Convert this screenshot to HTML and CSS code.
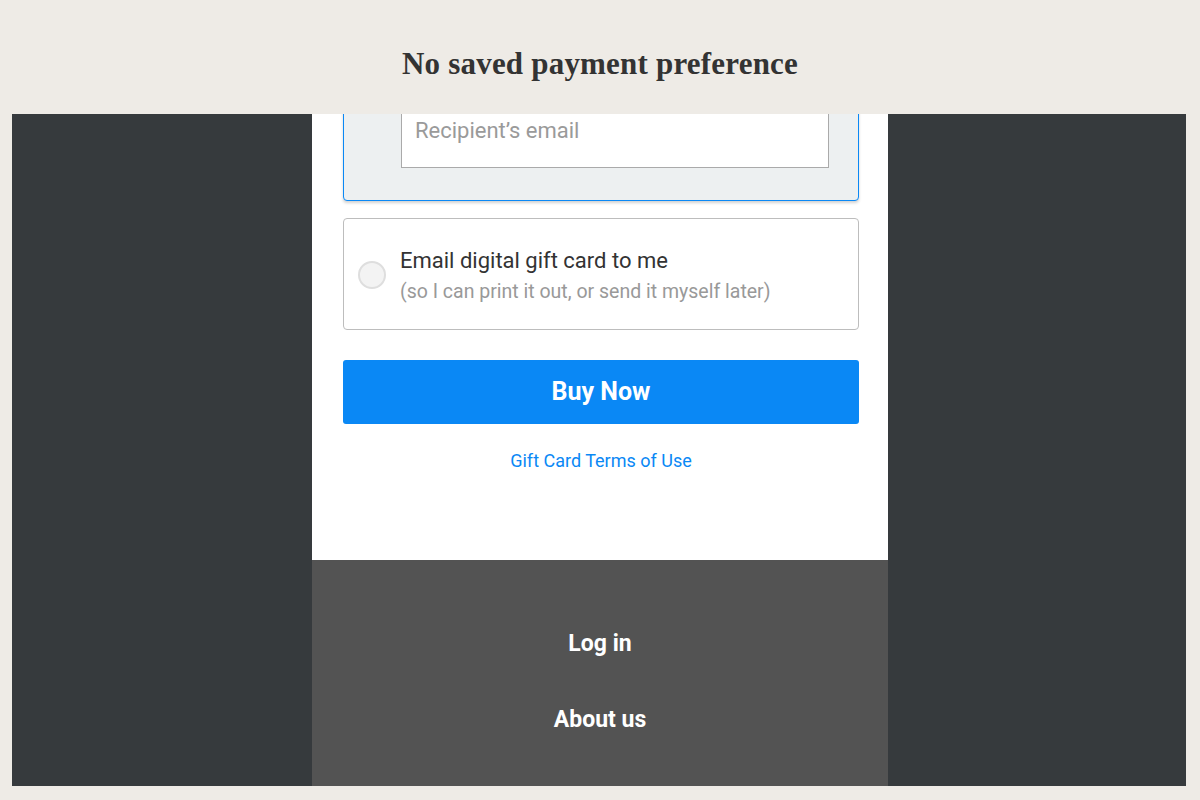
FILE: index.html
```html
<!DOCTYPE html>
<html lang="en">
<head>
<meta charset="utf-8">
<title>No saved payment preference</title>
<link rel="stylesheet" href="styles.css">
</head>
<body>
<header class="page-header">
  <h1 class="page-title">No saved payment preference</h1>
</header>
<main class="frame">
  <div class="side"></div>
  <section class="phone">
    <div class="content">
      <div class="option option-selected">
        <textarea class="email-field" placeholder="Recipient’s email"></textarea>
      </div>
      <label class="option">
        <span class="radio"></span>
        <span class="option-text">
          <span class="option-title">Email digital gift card to me</span>
          <span class="option-sub">(so I can print it out, or send it myself later)</span>
        </span>
      </label>
      <button class="buy-button" type="button">Buy Now</button>
      <a class="terms-link" href="#">Gift Card Terms of Use</a>
    </div>
    <footer class="phone-footer">
      <a class="footer-link" href="#">Log in</a>
      <a class="footer-link" href="#">About us</a>
    </footer>
  </section>
  <div class="side"></div>
</main>
</body>
</html>
```

FILE: styles.css
```css
* { box-sizing: border-box; }
html, body { margin: 0; padding: 0; }
body {
  width: 1200px;
  height: 800px;
  background: #eeebe6;
  font-family: Roboto, "Liberation Sans", sans-serif;
  overflow: hidden;
}
.page-header {
  height: 114px;
  display: flex;
  align-items: center;
  justify-content: center;
}
.page-title {
  margin: 0;
  padding-top: 14px;
  font-family: "Liberation Serif", "DejaVu Serif", serif;
  font-weight: 700;
  font-size: 31px;
  color: #333333;
  letter-spacing: 0.2px;
}
.frame {
  margin: 0 14px 0 12px;
  height: 672px;
  background: #363a3d;
  display: grid;
  grid-template-columns: 300px 576px 1fr;
  overflow: hidden;
}
.phone {
  background: #ffffff;
  display: flex;
  flex-direction: column;
  overflow: hidden;
}
.content {
  padding: 0 29px 0 31px;
  height: 446px;
  display: flex;
  flex-direction: column;
}
.option {
  border: 1px solid #bdbdbd;
  border-radius: 4px;
  background: #ffffff;
  display: flex;
  align-items: center;
  padding: 28px 16px 26px 14px;
  margin-top: 17px;
}
.option-selected {
  margin-top: -40px;
  display: block;
  border-color: #0a88f5;
  background: #edf0f1;
  padding: 37px 29px 32px 57px;
  box-shadow: 0 2px 3px rgba(0,0,0,0.18);
}
.email-field {
  display: block;
  width: 100%;
  height: 56px;
  border: 1px solid #aaaaaa;
  background: #ffffff;
  resize: none;
  font-family: Roboto, "Liberation Sans", sans-serif;
  font-size: 22px;
  line-height: 24px;
  padding: 6px 13px;
  margin: 0;
  color: #333;
  outline: none;
}
.email-field::placeholder { color: #9a9a9a; opacity: 1; }
.radio {
  flex: none;
  width: 28px;
  height: 28px;
  border-radius: 50%;
  background: #f3f3f3;
  border: 2px solid #dedede;
  margin-right: 14px;
}
.option-text {
  display: flex;
  flex-direction: column;
  gap: 6px;
}
.option-title {
  font-size: 22px;
  line-height: 28px;
  color: #333333;
}
.option-sub {
  font-size: 19.5px;
  line-height: 22px;
  color: #999999;
}
.buy-button {
  margin-top: 30px;
  height: 64px;
  border: none;
  border-radius: 3px;
  background: #0a88f5;
  color: #ffffff;
  font-family: Roboto, "Liberation Sans", sans-serif;
  font-weight: 700;
  font-size: 25px;
  padding: 0 0 2px;
}
.terms-link {
  margin-top: 26px;
  align-self: center;
  font-size: 18px;
  line-height: 22px;
  color: #0a88f5;
  text-decoration: none;
}
.phone-footer {
  flex: 1;
  background: #535353;
  display: flex;
  flex-direction: column;
  align-items: center;
  padding-top: 69px;
  gap: 46px;
}
.footer-link {
  color: #ffffff;
  font-weight: 700;
  font-size: 23px;
  line-height: 30px;
  text-decoration: none;
}
```
